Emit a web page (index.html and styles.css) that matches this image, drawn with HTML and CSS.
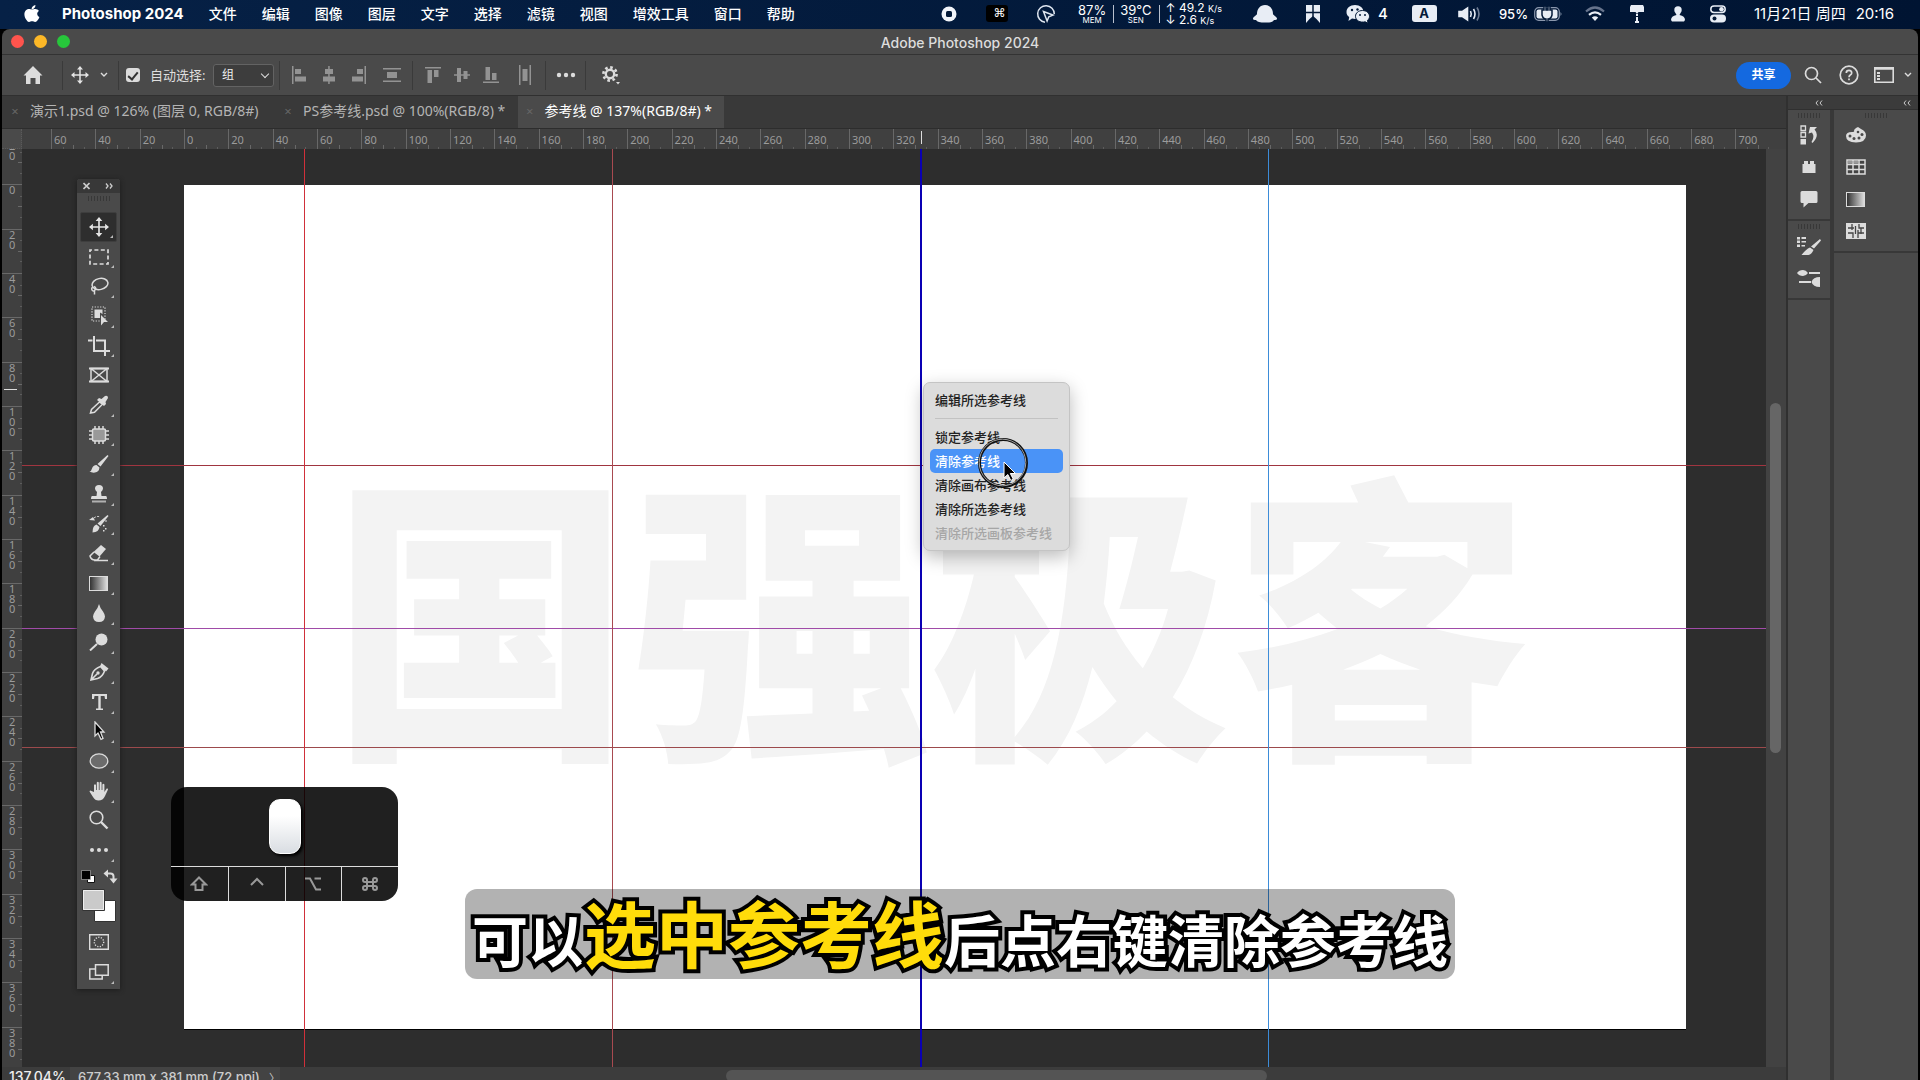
FILE: index.html
```html
<!DOCTYPE html>
<html lang="zh-CN">
<head>
<meta charset="utf-8">
<title>Adobe Photoshop 2024</title>
<link rel="stylesheet" href="styles.css">
</head>
<body>
<header class="menubar">
  <svg class="apple" width="18" height="20" viewBox="0 0 18 20"><path fill="#fff" d="M12.4 1c.1 1.200-.4 2.300-1.100 3.100-.7.800-1.700 1.400-2.700 1.300-.1-1.100.4-2.300 1.100-3C10.400 1.600 11.500 1.100 12.400 1zM15.900 6.900c-1 .6-1.700 1.600-1.700 2.900 0 1.500.9 2.700 2.200 3.200-.3.900-.8 1.900-1.400 2.700-.8 1.200-1.600 2.300-2.900 2.300-1.200 0-1.600-.7-3-.7s-1.900.7-3 .7c-1.200.1-2.200-1.200-3-2.400C1.400 13.100.6 8.900 2.500 6.800c.9-1.100 2.200-1.700 3.400-1.700 1.300 0 2.100.7 3.200.7 1 0 1.700-.7 3.200-.7 1.400 0 2.800.7 3.600 1.800z"/></svg>
  <nav class="menus">
    <a href="#" class="app-name">Photoshop 2024</a><a href="#">文件</a><a href="#">编辑</a><a href="#">图像</a><a href="#">图层</a><a href="#">文字</a><a href="#">选择</a><a href="#">滤镜</a><a href="#">视图</a><a href="#">增效工具</a><a href="#">窗口</a><a href="#">帮助</a>
  </nav>
  <div class="tray">
    <svg width="16" height="16" viewBox="0 0 16 16"><circle cx="8" cy="8" r="7.500" fill="#f2f5fa"/><rect x="5" y="5" width="6" height="6" rx="1.500" fill="#041a38"/></svg>
    <span class="cmd-box">⌘</span>
    <svg width="20" height="20" viewBox="0 0 20 20" fill="none" stroke="#dfe6f0" stroke-width="1.500"><path d="M9 18.200A8.300 8.300 0 1 1 18.300 10M7.500 7.500l9.500 3.600-4.200 1.700-1.700 4.200z"/></svg>
    <div class="stats">
      <div class="stat"><b>87%</b><small>MEM</small></div>
      <div class="stat"><b>39°C</b><small>SEN</small></div>
      <div class="net"><span>↑ 49.2 <i>K/s</i></span><span>↓ 2.6 <i>K/s</i></span></div>
    </div>
    <svg width="24" height="18" viewBox="0 0 24 18" fill="#e8edf5"><path d="M12 0c5 0 8 4 8 9 0 1 3.500 2.500 4 4.500.2 1-1 1.500-3 1.500-1 2-4 2.500-9 2.500S4 17 3 15c-2 0-3.200-.5-3-1.500C.5 11.500 4 10 4 9c0-5 3-9 8-9z"/></svg>
    <svg class="bookmark" width="14" height="18" viewBox="0 0 14 18"><path fill="#e8edf5" d="M0 0h14v18l-3.500-4L7 11l-3.500 3L0 18z"/><path stroke="#041a38" stroke-width="1.500" d="M7 0v12M0 7.500h14"/></svg>
    <div class="wechat"><svg width="24" height="20" viewBox="0 0 24 20"><path fill="#e8edf5" d="M9 1c5 0 8.500 3 8.500 7S14 15 9 15l-3-.4L2.500 17l.7-4C1.200 11.700.5 10 .5 8 .5 4 4 1 9 1z"/><path fill="#e8edf5" stroke="#041a38" d="M16.500 6.500c4 0 7 2.500 7 5.800 0 1.700-.7 3-2 4l.5 3-2.800-1.500c-5 1.200-9.700-1.300-9.700-5.500 0-3.300 3-5.800 7-5.800z"/><g fill="#041a38"><circle cx="6" cy="6" r="1.200"/><circle cx="11.500" cy="5.500" r="1.200"/><circle cx="14" cy="11" r="1"/><circle cx="19" cy="11" r="1"/></g></svg><span>4</span></div>
    <span class="input-src">A</span>
    <svg width="24" height="16" viewBox="0 0 24 16" fill="none" stroke="#e8edf5" stroke-width="1.600"><path fill="#e8edf5" d="M1 5.500h3.500L9.500 2v12L4.500 10.500H1z"/><path d="M12.500 5q1.500 3 0 6M15.500 3q3 5 0 10"/><path stroke="#6f7c93" d="M19 1.500q4 6.500 0 13"/></svg>
    <div class="battery"><span>95%</span><svg width="29" height="16" viewBox="0 0 29 16"><rect x=".7" y="1.700" width="24.600" height="12.600" rx="4" fill="none" stroke="#8a97ad" stroke-width="1.200"/><rect x="2.500" y="3.500" width="21" height="9" rx="2" fill="#e8edf5"/><path fill="#8a97ad" d="M26.500 6q2 2 0 4z"/><path fill="#e8edf5" stroke="#041a38" stroke-width="1.500" d="M10 0v4H8v5q1 4 4 4v3h2v-3q3 0 4-4V4h-2V0h-2v4h-2V0z"/></svg></div>
    <svg width="20" height="16" viewBox="0 0 20 16" fill="none" stroke-width="2.200"><path stroke="#66738c" d="M1 5.500q9-8 18 0"/><path stroke="#e8edf5" d="M4 8.800q6-5 12 0"/><path fill="#e8edf5" d="M6.800 11.500q3.200-2.500 6.400 0L10 15z"/></svg>
    <svg width="16" height="18" viewBox="0 0 16 18" fill="#e8edf5"><path d="M2 0h12l1 2v5H9.500L8 9 6.500 7H1V2z"/><path d="M7 9h2v2H7zM7 12h2v5H7zM6 16h4v2H6z"/></svg>
    <svg width="14" height="16" viewBox="0 0 14 16" fill="#e8edf5"><circle cx="7" cy="4" r="3.700"/><path d="M4.500 7h5l-1 2q5.500 1 5.500 5l-1 1.500H1L0 14q0-4 5.500-5z"/></svg>
    <svg width="16" height="18" viewBox="0 0 16 18"><rect x=".8" y="1" width="14.400" height="6.500" rx="3.200" fill="none" stroke="#e8edf5" stroke-width="1.500"/><circle cx="11.500" cy="4.200" r="2.300" fill="#e8edf5"/><rect x="0" y="9.500" width="16" height="8" rx="4" fill="#e8edf5"/><circle cx="4.500" cy="13.500" r="2" fill="#041a38"/></svg>
    <time class="clock"><span>11月21日 周四</span><span>20:16</span></time>
  </div>
</header>

<div class="window">
  <div class="titlebar">
    <div class="lights"><button class="close" aria-label="关闭"></button><button class="mini" aria-label="最小化"></button><button class="full" aria-label="全屏"></button></div>
    <h1>Adobe Photoshop 2024</h1>
  </div>

  <div class="options">
    <div class="group g-home"><button aria-label="主页"><svg width="20" height="20" viewBox="0 0 20 20"><path fill="#dcdcdc" d="M10 1l9.500 9.500H17V19h-4.500v-6h-5v6H3v-8.500H.5z"/></svg></button></div>
    <div class="group g-move"><button aria-label="移动工具"><svg width="18" height="18" viewBox="0 0 18 18"><use href="#i-move"/></svg></button><svg width="8" height="6" viewBox="0 0 8 6"><path d="M1 1l3 3 3-3" fill="none" stroke="#ddd" stroke-width="1.400"/></svg></div>
    <div class="group g-auto"><input type="checkbox" id="auto" checked><label for="auto">自动选择:</label><select aria-label="选择对象"><option>组</option></select></div>
    <div class="group g-align">
      <button aria-label="左对齐"><svg width="16" height="18" viewBox="0 0 16 18"><path d="M0 0h1.500v18H0zM3 3h6v5H3zM3 10.500h11v5H3z"/></svg></button>
      <button aria-label="水平居中"><svg width="16" height="18" viewBox="0 0 16 18"><path d="M7.200 0h1.500v18H7.200zM4 3h8v5H4zM2 10.500h12v5H2z"/></svg></button>
      <button aria-label="右对齐"><svg width="16" height="18" viewBox="0 0 16 18"><path d="M14.500 0H16v18h-1.500zM7 3h6v5H7zM2 10.500h11v5H2z"/></svg></button>
      <button class="wide" aria-label="水平分布"><svg width="18" height="16" viewBox="0 0 18 16"><path d="M0 1h18v1.500H0zM0 13.500h18V15H0zM4 5h10v6H4z"/></svg></button>
    </div>
    <div class="group g-align">
      <button aria-label="顶对齐"><svg width="16" height="18" viewBox="0 0 16 18"><path d="M0 1h16v1.500H0zM2.500 4h4.500v13H2.500zM9 4h4.500v7H9z"/></svg></button>
      <button aria-label="垂直居中"><svg width="16" height="18" viewBox="0 0 16 18"><path d="M0 8.200h16v1.500H0zM3 2h4v14H3zM9.500 5h4v8h-4z"/></svg></button>
      <button aria-label="底对齐"><svg width="16" height="18" viewBox="0 0 16 18"><path d="M0 15.500h16V17H0zM2.500 1h4.500v13H2.500zM9 7h4.500v7H9z"/></svg></button>
      <button class="wide" aria-label="垂直分布"><svg width="14" height="20" viewBox="0 0 14 20"><path d="M1 0h1.500v20H1zM11.500 0H13v20h-1.500zM4.500 4h5v12h-5z"/></svg></button>
    </div>
    <div class="group g-dots"><button aria-label="更多"><svg width="20" height="6" viewBox="0 0 20 6" fill="#dcdcdc"><circle cx="3" cy="3" r="2.200"/><circle cx="10" cy="3" r="2.200"/><circle cx="17" cy="3" r="2.200"/></svg></button></div>
    <div class="group g-gear"><button aria-label="设置"><svg width="20" height="20" viewBox="0 0 20 20"><circle cx="9" cy="9" r="4.200" fill="none" stroke="#dcdcdc" stroke-width="2.400"/><circle cx="9" cy="9" r="6.600" fill="none" stroke="#dcdcdc" stroke-width="2.600" stroke-dasharray="2.600 2.580"/><path fill="#dcdcdc" d="M15 17h4l-2 2.500z"/></svg></button></div>
    <div class="spacer"></div>
    <div class="right-tools">
      <button class="share">共享</button>
      <button aria-label="搜索"><svg width="18" height="18" viewBox="0 0 18 18" fill="none" stroke="#dcdcdc" stroke-width="1.700"><circle cx="7.500" cy="7.500" r="6"/><path d="M12 12l5 5"/></svg></button>
      <button aria-label="帮助"><svg width="20" height="20" viewBox="0 0 20 20" fill="none" stroke="#dcdcdc" stroke-width="1.700"><circle cx="10" cy="10" r="8.800"/><path d="M7.300 8q0-2.700 2.700-2.700T12.700 8q0 1.200-1.400 2-1.300.8-1.300 2.300M10 13.500v1.800"/></svg></button>
      <button class="workspace" aria-label="工作区"><svg width="20" height="16" viewBox="0 0 20 16" fill="none" stroke="#dcdcdc" stroke-width="1.600"><path d="M.8.800h18.400v14.400H.8zM.8 2h18.400"/><path d="M4.500 5v8" stroke-width="3" stroke-dasharray="2 1"/></svg><svg width="8" height="6" viewBox="0 0 8 6"><path d="M1 1l3 3 3-3" fill="none" stroke="#ddd" stroke-width="1.400"/></svg></button>
    </div>
  </div>

  <div class="body">
    <main class="doc">
      <div class="tabs">
        <a href="#" class="tab t1"><i>×</i>演示1.psd @ 126% (图层 0, RGB/8#)</a>
        <a href="#" class="tab t2"><i>×</i>PS参考线.psd @ 100%(RGB/8) *</a>
        <a href="#" class="tab active"><i>×</i>参考线 @ 137%(RGB/8#) *</a>
      </div>
      <div class="work">
        <div class="corner"></div>
        <div class="ruler-h"><div class="scale"><span>60</span><span>40</span><span>20</span><span>0</span><span>20</span><span>40</span><span>60</span><span>80</span><span>100</span><span>120</span><span>140</span><span>160</span><span>180</span><span>200</span><span>220</span><span>240</span><span>260</span><span>280</span><span>300</span><span>320</span><span>340</span><span>360</span><span>380</span><span>400</span><span>420</span><span>440</span><span>460</span><span>480</span><span>500</span><span>520</span><span>540</span><span>560</span><span>580</span><span>600</span><span>620</span><span>640</span><span>660</span><span>680</span><span>700</span></div><div class="mark-x"></div></div>
        <div class="ruler-v"><div class="scale"><span>20</span><span>0</span><span>20</span><span>40</span><span>60</span><span>80</span><span>100</span><span>120</span><span>140</span><span>160</span><span>180</span><span>200</span><span>220</span><span>240</span><span>260</span><span>280</span><span>300</span><span>320</span><span>340</span><span>360</span><span>380</span></div><div class="mark-y"></div></div>
        <div class="stage">
          <div class="artboard"><p>国强极客</p></div>
          <div class="guide h h1"></div><div class="guide h h2"></div><div class="guide h h3"></div>
          <div class="guide v v1"></div><div class="guide v v2"></div><div class="guide v v3"></div><div class="guide v v4"></div>

          <aside class="toolbox">
            <div class="tb-head"><svg width="7" height="8" viewBox="0 0 7 8"><path d="M.5 1l6 6M6.500 1l-6 6" stroke="#ccc" stroke-width="1.600"/></svg><svg width="8" height="6" viewBox="0 0 8 6" fill="none" stroke="#ccc" stroke-width="1.300"><path d="M1 .5L3 3 1 5.500M5 .5L7 3 5 5.500"/></svg></div>
            <div class="grip"></div>
            <div class="tools">
              <button class="on sub" aria-label="移动"><svg width="20" height="20" viewBox="0 0 18 18"><g id="i-move" fill="none" stroke="#e4e4e4" stroke-width="1.500"><path d="M9 2v14M2 9h14"/><path fill="#e4e4e4" stroke="none" d="M9 0l3 3.500H6zM9 18l3-3.500H6zM0 9l3.500-3v6zM18 9l-3.500-3v6z"/></g></svg></button>
              <button class="sub" aria-label="选框"><svg width="20" height="16" viewBox="0 0 20 16"><rect x="1" y="1" width="18" height="14" fill="none" stroke="#dcdcdc" stroke-width="1.700" stroke-dasharray="4 2.400" stroke-dashoffset="2"/></svg></button>
              <button class="sub" aria-label="套索"><svg width="20" height="18" viewBox="0 0 20 18" fill="none" stroke="#dcdcdc" stroke-width="1.500"><ellipse cx="11" cy="7" rx="8" ry="5.500" transform="rotate(-12 11 7)"/><path d="M4 10q-2 1-1 3t3 0-1-3.500M5.500 13v4.500"/></svg></button>
              <button class="sub" aria-label="对象选择"><svg width="20" height="20" viewBox="0 0 20 20"><rect x="3" y="1" width="13" height="14" fill="none" stroke="#dcdcdc" stroke-width="1.200" stroke-dasharray="1.200 1.500"/><path fill="#dcdcdc" d="M5.500 3.500h8V8L11 6.500V12H5.500z"/><path fill="#dcdcdc" d="M12 9l7 7h-4l-3 3.500z"/></svg></button>
              <button class="sub" aria-label="裁剪"><svg width="22" height="20" viewBox="0 0 22 20" fill="none" stroke="#dcdcdc" stroke-width="2"><path d="M6 0v15h16M0 4.500h4.500M8 4.500h9V20"/></svg></button>
              <button aria-label="图框"><svg width="20" height="16" viewBox="0 0 20 16" fill="none" stroke="#dcdcdc" stroke-width="1.500"><path d="M2 1.500h16v13H2zM2 1.500l16 13M18 1.500l-16 13"/><path d="M0 1.500h20M0 14.500h20" stroke-width="1.800"/></svg></button>
              <button class="sub" aria-label="吸管"><svg width="20" height="20" viewBox="0 0 20 20"><path fill="none" stroke="#dcdcdc" stroke-width="1.500" d="M10.500 7L2.500 14.500 1.500 18l4-.8 8-8z"/><path fill="#dcdcdc" d="M16 1q3-1 3 2l-2.500 4 .5 2-2 2-7-6 2-2 2.500 1z"/></svg></button>
              <button class="sub" aria-label="修复"><svg width="20" height="18" viewBox="0 0 20 18"><path stroke="#dcdcdc" stroke-width="1.500" d="M6 0v18M10 0v18M14 0v18M0 5h20M0 9h20M0 13h20"/><rect x="3.500" y="3" width="13" height="12" rx="1.500" fill="#999" stroke="#dcdcdc" stroke-width="1.500"/></svg></button>
              <button class="sub" aria-label="画笔"><svg width="20" height="20" viewBox="0 0 20 20" fill="#dcdcdc"><path d="M18.500 1l1 1-8 10.500L8.500 10zM7.500 11l3 2.500Q10 18 6 18.500q-3 .5-5.500-1 2-.5 2.500-3Q4 11 7.500 11z"/></svg></button>
              <button class="sub" aria-label="图章"><svg width="18" height="20" viewBox="0 0 18 20" fill="#dcdcdc"><path d="M9 1q4 0 4 3.500Q13 6 11 8l.5 4H16q1 0 1 3H1q0-3 1-3h4.500L7 8Q5 6 5 4.500 5 1 9 1z"/><path opacity=".7" d="M2 16.500h14v2H2z"/></svg></button>
              <button class="sub" aria-label="历史画笔"><svg width="20" height="20" viewBox="0 0 20 20" fill="#dcdcdc"><path d="M18.500 1l1 1-8 10-3-2.500zM7.500 10.500l3 2.500q-.5 5-7 5.500 0-7 4-8zM0 6l4-3 2 3.500zM14 11h1.500v1.500H14zM16 14h1.500v1.500H16zM14 16h1.500v1.500H14z"/><path d="M5 4q3-2.500 6-1M17 6v3" fill="none" stroke="#dcdcdc" stroke-dasharray="2 1.500"/></svg></button>
              <button class="sub" aria-label="橡皮擦"><svg width="20" height="18" viewBox="0 0 20 18"><path fill="#dcdcdc" d="M12 1l5 4-6.500 7.500-6-4.500z"/><path fill="none" stroke="#dcdcdc" stroke-width="1.500" d="M5 8l-4 4q1 4 5 4h2.500l2.500-3.500M5 16.500h14"/></svg></button>
              <button class="sub" aria-label="渐变"><span class="grad"></span></button>
              <button class="sub" aria-label="模糊"><svg width="12" height="18" viewBox="0 0 12 18"><path fill="#dcdcdc" d="M6 0q1 4 4 7.500 2 3 2 5Q11.500 18 6 18T0 12.500q0-2 2-5Q5 4 6 0z"/></svg></button>
              <button class="sub" aria-label="减淡"><svg width="20" height="18" viewBox="0 0 20 18"><circle cx="12.500" cy="6.500" r="6" fill="#dcdcdc"/><path d="M8 11l-7 6.500" stroke="#dcdcdc" stroke-width="2"/></svg></button>
              <button class="sub" aria-label="钢笔"><svg width="20" height="20" viewBox="0 0 20 20"><path fill="none" stroke="#dcdcdc" stroke-width="1.600" d="M11.500 4.500Q5 7 3.500 11.500L2 18l6.500-1.500Q13.500 15 15.500 9zM2 18l6-6"/><circle cx="9" cy="11" r="1.700" fill="#dcdcdc"/><path fill="#dcdcdc" d="M12.500 1l7 5.500-2.500 3-6-5z"/></svg></button>
              <button class="sub" aria-label="文字"><svg width="18" height="18" viewBox="0 0 18 18"><path fill="#dcdcdc" d="M2 1h15v5h-2l-.5-3H10.700v12.500H13V17H6v-1.500h2.300V3H4.500L4 6H2z"/></svg></button>
              <button class="sub" aria-label="路径选择"><svg width="14" height="20" viewBox="0 0 14 20"><path fill="#000" stroke="#dcdcdc" stroke-width="1.300" d="M3 1l9 10H8.500l2.500 6.500-2 .8L6 12l-3 3z"/></svg></button>
              <button class="sub" aria-label="椭圆"><svg width="20" height="16" viewBox="0 0 20 16"><ellipse cx="10" cy="8" rx="8.800" ry="7.200" fill="#6c6c6c" stroke="#dcdcdc" stroke-width="1.300"/></svg></button>
              <button class="sub" aria-label="抓手"><svg width="20" height="20" viewBox="0 0 20 20"><path fill="#dcdcdc" d="M5 11V4q1-1.300 2 0v5h.8V1.500q1-1.500 2 0V9h.8V1.500q1-1.500 2 0V9h.8V3.500q1-1.300 2 0V11l2.300-3.500q1.500-.5 1.300 1L16 15q-2 4.500-6.500 4.500Q6 19.500 4 16L.5 10.500q.5-1.500 2-.5z"/></svg></button>
              <button aria-label="缩放"><svg width="20" height="20" viewBox="0 0 20 20" fill="none" stroke="#dcdcdc"><circle cx="7.500" cy="7.500" r="6.300" stroke-width="1.600"/><path d="M12 12l6.500 6.500" stroke-width="2.400"/></svg></button>
              <button class="sub" aria-label="编辑工具栏"><svg width="20" height="6" viewBox="0 0 20 6" fill="#dcdcdc"><circle cx="3" cy="3" r="2"/><circle cx="10" cy="3" r="2"/><circle cx="17" cy="3" r="2"/></svg></button>
            </div>
            <svg class="swatches" width="38" height="54" viewBox="0 0 38 54"><path fill="#fff" stroke="#111" d="M7.500 6.500h7v7h-7z"/><path fill="#000" stroke="#bbb" stroke-width=".6" d="M1.500 1.500h9v9h-9z"/><path d="M27 4.500h3.500q3 0 3 3V11" fill="none" stroke="#dcdcdc" stroke-width="2"/><path fill="#dcdcdc" d="M23.500 4.500L28 .5v8zM33.500 14.500L29.500 9.500h8z"/><path fill="#fff" stroke="#333" d="M14.500 31.500h21v21h-21z"/><path fill="#cacaca" stroke="#333" d="M2.500 20.500h22v21h-22z"/><path fill="none" stroke="#eee" d="M3.500 21.500h20v19h-20z"/></svg>
            <button aria-label="快速蒙版"><svg width="20" height="16" viewBox="0 0 20 16" fill="none" stroke="#dcdcdc" stroke-width="1.400"><path d="M.7.700h18.600v14.600H.7z"/><circle cx="10" cy="8" r="4.700" stroke-dasharray="1.200 1.400"/></svg></button>
            <button class="sub" aria-label="屏幕模式"><svg width="20" height="16" viewBox="0 0 20 16" fill="#4a4a4a" stroke="#dcdcdc" stroke-width="1.500"><path d="M.8 5h12.400v10H.8z"/><path d="M6.500.8h12.700v10.400H6.500z"/></svg></button>
          </aside>

          <div class="context" role="menu">
            <button role="menuitem">编辑所选参考线</button>
            <hr>
            <button role="menuitem">锁定参考线</button>
            <button role="menuitem" class="hot">清除参考线</button>
            <button role="menuitem">清除画布参考线</button>
            <button role="menuitem">清除所选参考线</button>
            <button role="menuitem" disabled>清除所选画板参考线</button>
          </div>
          <svg class="pointer" width="52" height="52" viewBox="0 0 52 52"><circle cx="26" cy="26" r="23.500" fill="none" stroke="#111" stroke-width="3"/><circle cx="25.500" cy="25.500" r="23.300" fill="none" stroke="#ddd" stroke-width=".7"/><path fill="#000" stroke="#fff" stroke-width="1" d="M27 25v16l3.800-3.500 3 6 2.500-1.300-3-5.700h5.200z"/></svg>

          <div class="keys">
            <div class="mouse-row"><span class="mouse"></span></div>
            <div class="mods">
              <span><svg width="18" height="16" viewBox="0 0 18 16"><path d="M9 1.500l7 7h-3.500V14h-7V8.500H2z"/></svg></span>
              <span><svg width="18" height="16" viewBox="0 0 18 16"><path d="M3 9l6-6 6 6"/></svg></span>
              <span><svg width="18" height="16" viewBox="0 0 18 16"><path d="M1 2.500h5l6 11h5M10.500 2.500H17"/></svg></span>
              <span><svg width="18" height="16" viewBox="0 0 18 16"><path d="M6 6V4a2 2 0 1 0-2 2h10a2 2 0 1 0-2-2v8a2 2 0 1 0 2-2H4a2 2 0 1 0 2 2z"/></svg></span>
            </div>
          </div>

          <p class="caption">可以<em>选中参考线</em>后点右键清除参考线</p>
        </div>
        <div class="vscroll"><div class="thumb"></div></div>
      </div>
      <footer class="status"><span class="zoom">137.04%</span><span class="size">677.33 mm x 381 mm (72 ppi)<b>〉</b></span><div class="hscroll"><div class="thumb"></div></div></footer>
    </main>

    <aside class="docks">
      <div class="dock d1">
        <div class="dock-head"><svg width="8" height="6" viewBox="0 0 8 6"><path d="M3 .5L1 3l2 2.500M7 .5L5 3l2 2.500" fill="none" stroke="#ccc"/></svg></div>
        <div class="panel">
          <div class="grip"></div>
          <button aria-label="历史记录"><svg width="18" height="20" viewBox="0 0 18 20"><path fill="none" stroke="#dcdcdc" stroke-width="1.300" d="M1 1h4.500v4.500H1zM1 7.500h4.500V12H1z"/><path fill="#dcdcdc" d="M.5 14H6v5.500H.5z"/><path fill="#dcdcdc" d="M8.500 8.500L10 2h7l-2.500 2.500q5.500 6-2 13.500-.5-.5-1-1 3.500-5 .5-9.500z"/></svg></button>
          <button aria-label="库"><svg width="14" height="14" viewBox="0 0 14 14" fill="#dcdcdc"><path d="M1 4h1V1h4v3h2V1h4v3h1.500v9H.5V4z"/></svg></button>
          <button aria-label="注释"><svg width="18" height="18" viewBox="0 0 18 18" fill="#dcdcdc"><path d="M2 1h14q1.500 0 1.500 1.500v9q0 1.500-1.500 1.500H8.500l-5 4.500V13H2Q.5 13 .5 11.500v-9Q.5 1 2 1z"/></svg></button>
        </div>
        <div class="panel">
          <div class="grip"></div>
          <button aria-label="画笔设置"><svg width="24" height="20" viewBox="0 0 24 20" fill="#dcdcdc"><path d="M0 1h3v2.500H0zM4.500 1H9v2H4.500zM0 4.500h3V7H0zM4.500 5H9v1.500H4.500zM0 8.500h3V11H0zM4.500 9H8v1.500H4.500zM23 3l1 1.500-7 8-3-2zM13 11.500l3.500 2.500q-2 4.500-5 5H4.500q4.500-6 8.500-7.500z"/></svg></button>
          <button aria-label="画笔"><svg width="24" height="20" viewBox="0 0 24 20" fill="#dcdcdc"><path d="M0 5q2-3 6-3 3 0 5 3-2 3-5 3Q2 8 0 5zM12 4h11v2H12zM2 13h12v2H2zM23 9v10q-7 0-8.500-5Q16 9 23 9z"/></svg></button>
        </div>
      </div>
      <div class="dock d2">
        <div class="dock-head"><svg width="8" height="6" viewBox="0 0 8 6"><path d="M3 .5L1 3l2 2.500M7 .5L5 3l2 2.500" fill="none" stroke="#ccc"/></svg></div>
        <div class="panel">
          <div class="grip"></div>
          <button aria-label="颜色"><svg width="20" height="16" viewBox="0 0 20 16"><path fill="#dcdcdc" d="M10 1l2-1 3 2q5 2 5 6.500Q20 15 10 15.500 0 15 0 9q0-4 6-4 3 0 2-2z"/><g fill="#4a4a4a"><circle cx="4" cy="9" r="1.500"/><circle cx="8" cy="11.500" r="1.500"/><circle cx="13" cy="11" r="1.500"/><circle cx="16" cy="7.500" r="1.500"/><circle cx="12" cy="5" r="1.300"/></g></svg></button>
          <button aria-label="色板"><svg width="20" height="16" viewBox="0 0 20 16"><path fill="#444" stroke="#dcdcdc" stroke-width="1.500" d="M1 1h18v14H1zM1 5.500h18M1 10.500h18M7 1v14M13 1v14"/><path fill="#999" d="M2 2h4.200v2.800H2zM8 2h4.200v2.800H8z"/></svg></button>
          <button aria-label="渐变"><span class="grad"></span></button>
          <button aria-label="图案"><svg width="20" height="16" viewBox="0 0 20 16"><path fill="#dcdcdc" d="M0 0h20v16H0z"/><path fill="none" stroke="#444" stroke-width="1.300" d="M6 1v6M2 5h6M13 1v4h5M9.500 3v8M2 10h5v5M12 7v8M12 10h6M15 5v6"/></svg></button>
        </div>
      </div>
    </aside>
  </div>
</div>
</body>
</html>
```
FILE: styles.css
```css
* { box-sizing: border-box; }

body {
  margin: 0;
  height: 100vh;
  display: flex;
  flex-direction: column;
  overflow: hidden;
  background: #000;
  color: #dedede;
  font: 13px/16px "Noto Sans", "Noto Sans CJK SC", sans-serif;
}

p, h1 { margin: 0; }
a { color: inherit; text-decoration: none; }
svg { display: block; flex: none; }
button {
  display: flex;
  align-items: center;
  justify-content: center;
  margin: 0;
  padding: 0;
  border: 0;
  background: none;
  color: inherit;
  font: inherit;
}

/* System menu bar */
.menubar {
  flex: none;
  display: flex;
  align-items: center;
  height: 29px;
  padding: 0 10px 2px 23px;
  background: linear-gradient(90deg, #062146, #001432);
  color: #fff;
  font: 500 14px/26px Inter, "Noto Sans CJK SC", sans-serif;
}
.menus { display: flex; gap: 25px; margin-left: 21px; white-space: nowrap; }
.app-name { font-weight: 700; font-size: 15px; }
.tray {
  flex: 1;
  display: grid;
  grid-template-columns: 47px 49px 49px 160px 70px 37px 60px 54px 38px 84px 43px 41px 41px 40px 172px;
  justify-content: end;
  justify-items: center;
  align-items: center;
  white-space: nowrap;
}
.cmd-box { padding-left: 8px; width: 22px; height: 17px; border-radius: 3px; background: #000; font: 12px/17px "DejaVu Sans", sans-serif; }
.stats { display: flex; line-height: 13px; font-weight: 400; }
.stat { display: flex; flex-direction: column; align-items: center; padding-right: 7px; margin-right: 6px; border-right: 1px solid #b8c0ce; height: 18px; justify-content: center; }
.stat b { font-weight: 400; font-size: 13px; line-height: 12px; }
.stat small { font-size: 8px; line-height: 8px; }
.net { display: flex; flex-direction: column; justify-content: center; font-size: 12px; line-height: 11px; height: 18px; }
.net i { font-style: normal; font-size: 9px; }
.bookmark { margin-right: 12px; }
.wechat, .battery { display: flex; align-items: center; gap: 8px; }
.wechat { font-size: 15px; }
.battery { gap: 6px; font-size: 13px; }
.input-src { width: 25px; height: 17px; border-radius: 3px; background: #e8edf5; color: #041a38; font-weight: 700; font-size: 13px; line-height: 17px; text-align: center; }
.clock { display: flex; gap: 10px; font-size: 15px; font-weight: 400; }

/* Application window */
.window {
  flex: 1;
  min-height: 0;
  display: flex;
  flex-direction: column;
  margin: 0 2px;
  border-radius: 8px 8px 0 0;
  overflow: hidden;
  background: #4a4a4a;
}
.titlebar {
  flex: none;
  display: grid;
  grid-template-columns: 1fr auto 1fr;
  align-items: center;
  height: 26px;
  padding: 0 9px;
  border-bottom: 1px solid #333;
}
.titlebar h1 { padding-top: 2px; font: 500 14px/22px Inter, sans-serif; color: #ddd; }
.lights { display: flex; gap: 10px; }
.lights button { width: 13px; height: 13px; border-radius: 50%; }
.close { background: #ff544d; }
.mini { background: #fdb827; }
.full { background: #27c63b; }

/* Tool options */
.options { flex: none; display: flex; align-items: center; height: 41px; border-bottom: 1px solid #303030; }
.group { display: flex; align-items: center; height: 29px; border-left: 1px solid #3a3a3a; }
.g-home { width: 60px; padding-left: 21px; border: 0; }
.g-move { width: 56px; padding-left: 8px; gap: 11px; }
.g-auto { position: relative; width: 161px; padding-left: 7px; }
.g-auto input {
  appearance: none;
  width: 14px;
  height: 14px;
  margin: 0 10px 0 0;
  border-radius: 3px;
  background: #dcdcdc;
  display: grid;
  place-items: center;
}
.g-auto input:checked::after { content: ""; width: 4px; height: 8px; border: solid #333; border-width: 0 2px 2px 0; rotate: 40deg; }
.g-auto label { width: 63px; white-space: nowrap; }
.g-auto select {
  appearance: none;
  width: 61px;
  height: 23px;
  padding: 0 0 0 8px;
  border: 1px solid #636363;
  border-radius: 3px;
  background: #3d3d3d;
  color: #eee;
  font: inherit;
  font-size: 12px;
}
.g-auto::after {
  content: "";
  position: absolute;
  right: 11px;
  top: 10px;
  width: 5px;
  height: 5px;
  border: solid #ddd;
  border-width: 0 1px 1px 0;
  rotate: 45deg;
}
.g-align { width: 133px; padding-left: 6px; fill: #939393; }
.g-align button { width: 29px; }
.g-align .wide { width: 40px; }
.g-dots { width: 40px; justify-content: center; }
.g-gear { width: 50px; justify-content: center; }
.spacer { flex: 1; }
.right-tools { display: flex; align-items: center; gap: 17px; padding-right: 6px; }
.share { width: 55px; height: 27px; margin-right: -4px; border-radius: 14px; background: #1469e0; color: #fff; font-weight: 700; font-size: 12px; }
.workspace { gap: 10px; margin-left: -2px; }

/* Document area */
.body { flex: 1; min-height: 0; display: flex; }
.doc { flex: 1; min-width: 0; display: flex; flex-direction: column; background: #424242; }
.tabs { flex: none; display: flex; height: 33px; background: #393939; border-bottom: 1px solid #2d2d2d; color: #b4b4b4; font-size: 14px; line-height: 30px; white-space: nowrap; }
.tab { display: flex; gap: 11px; padding: 0 12px 0 8px; }
.tab i { width: 8px; font-style: normal; font-size: 13px; color: #666; text-align: center; }
.t1 { width: 274px; padding-left: 9px; }
.t2 { width: 242px; }
.tab.active { width: 206px; background: #4a4a4a; color: #fff; }

.work { flex: 1; min-height: 0; display: grid; grid-template: 20px minmax(0, 1fr) / 20px minmax(0, 1fr) 20px; }
.corner { background: #4a4a4a; border: 1px dotted #5a5a5a; border-width: 0 1px 1px 0; }
.ruler-h, .ruler-v { position: relative; background: #404040; color: #9b9b9b; font: 11px/10px "Noto Sans", sans-serif; }
.ruler-h { grid-column: 2 / -1; overflow: hidden; }
.ruler-h .scale { display: flex; height: 20px; margin: 0 6px 0 29px; }
.ruler-h span {
  flex: 1 1 0;
  min-width: 0;
  padding: 6px 0 0 2px;
  border-left: 1px solid #686868;
  background:
    linear-gradient(#686868, #686868) 50% 100% / 1px 4px no-repeat,
    linear-gradient(#5c5c5c, #5c5c5c) 25% 100% / 1px 2px no-repeat,
    linear-gradient(#5c5c5c, #5c5c5c) 75% 100% / 1px 2px no-repeat;
}
.mark-x { position: absolute; left: 899px; top: 2px; width: 1px; height: 13px; background: #ddd; }
.ruler-v { clip-path: inset(0); }
.ruler-v .scale { display: flex; flex-direction: column; height: calc(100% + 13px); margin-top: -9px; }
.ruler-v span {
  flex: 1 1 0;
  min-height: 0;
  padding: 0 6px 0 7px;
  border-top: 1px solid #686868;
  word-break: break-all;
  background:
    linear-gradient(#686868, #686868) 100% 50% / 4px 1px no-repeat,
    linear-gradient(#5c5c5c, #5c5c5c) 100% 25% / 2px 1px no-repeat,
    linear-gradient(#5c5c5c, #5c5c5c) 100% 75% / 2px 1px no-repeat;
}
.mark-y { position: absolute; left: 2px; top: 240px; width: 13px; height: 1px; background: #ddd; }

.stage { position: relative; overflow: hidden; background: #2d2d2d; }
.artboard {
  position: absolute;
  left: 162px;
  top: 36px;
  width: 1502px;
  height: 845px;
  background: #fff;
  border-bottom: 1px solid #000;
  display: grid;
  place-items: center;
}
.artboard p { padding: 0 8px 4px 0; color: #f3f3f3; font: 900 300px/360px "Noto Sans CJK SC", sans-serif; white-space: nowrap; }
.guide { position: absolute; }
.guide.h { left: 0; right: 0; height: 1px; }
.guide.v { top: 0; bottom: 0; width: 1px; }
.h1 { top: 316px; background: #a03540; }
.h2 { top: 479px; background: #a04ba8; }
.h3 { top: 598px; background: #9c4a4c; }
.v1 { left: 282px; background: #d0303a; }
.v2 { left: 590px; background: #a84a50; }
.guide.v3 { left: 898px; width: 2px; background: #0a00b4; }
.v4 { left: 1246px; background: #3d8cd8; }

/* Floating toolbox */
.toolbox {
  position: absolute;
  left: 55px;
  top: 30px;
  width: 43px;
  display: flex;
  flex-direction: column;
  align-items: center;
  padding-bottom: 2px;
  border-radius: 3px 3px 0 0;
  background: #4a4a4a;
  box-shadow: 0 1px 5px #1b1b1b;
}
.tb-head { align-self: stretch; display: flex; align-items: center; justify-content: space-between; height: 14px; padding: 0 7px 0 6px; background: #383838; border-radius: 3px 3px 0 0; }
.grip { width: 22px; height: 5px; margin: 3px 0; background: repeating-linear-gradient(90deg, #383838 0 1px, transparent 1px 3px); }
.tools { display: grid; grid-auto-rows: 1fr; height: 653px; margin-top: 8px; }
.toolbox button { position: relative; width: 37px; height: 30px; }
.tools button { height: auto; }
.toolbox .on { background: #2e2e2e; border: 1px solid #3e3e3e; border-radius: 2px; }
.sub::after { content: ""; position: absolute; right: 3px; bottom: 3px; border-left: 3px solid transparent; border-bottom: 3px solid #bbb; }
.grad { width: 19px; height: 15px; border: 1px solid #dcdcdc; background: linear-gradient(90deg, #333, #dcdcdc); }
.swatches { margin: 4px 0; }

/* Guide context menu */
.context {
  position: absolute;
  left: 901px;
  top: 233px;
  width: 147px;
  padding: 5px 6px;
  border: 1px solid #c4c4c4;
  border-radius: 7px;
  background: #dcdcdc;
  box-shadow: 0 6px 18px #0004;
  color: #222;
}
.context button { justify-content: flex-start; width: 100%; height: 24px; padding-left: 5px; border-radius: 5px; font: 500 13px/24px "Noto Sans CJK SC", sans-serif; white-space: nowrap; }
.context hr { height: 1px; margin: 6px 5px; border: 0; background: #c2c2c2; }
.context .hot { background: #4a93f7; color: #fff; }
.context button:disabled { color: #a6a6a6; }
.pointer { position: absolute; left: 955px; top: 288px; }

/* Keystroke display */
.keys { position: absolute; left: 149px; top: 638px; width: 227px; border-radius: 16px; overflow: hidden; background: #000000df; }
.mouse-row { display: grid; place-items: center; height: 80px; border-bottom: 1px solid #ddd; }
.mouse { width: 32px; height: 55px; border: 1px solid #fff; border-radius: 11px; background: linear-gradient(#fff 30%, #d9dde2); box-shadow: 2px 2px 3px #000; }
.mods { display: grid; grid-template-columns: repeat(4, 1fr); height: 34px; fill: none; stroke: #999; stroke-width: 2; }
.mods span { display: grid; place-items: center; }
.mods span + span { border-left: 1px solid #ddd; }

/* Subtitle */
.caption {
  position: absolute;
  left: 443px;
  top: 740px;
  width: 990px;
  height: 90px;
  padding-top: 2px;
  border-radius: 12px;
  background: #0000004d;
  color: #fff;
  text-align: center;
  white-space: nowrap;
  font: 700 56px/90px "Noto Sans CJK SC", sans-serif;
  -webkit-text-stroke: 8px #000;
  paint-order: stroke fill;
}
.caption em { font-style: normal; font-size: 72px; line-height: 80px; color: #ffdc0a; }

.vscroll { padding: 254px 5px 0 4px; background: #424242; }
.vscroll .thumb { height: 350px; border-radius: 6px; background: #666; }

/* Status bar */
.status { flex: none; display: flex; height: 13px; overflow: hidden; font: 500 14px/20px Inter, sans-serif; color: #ccc; white-space: nowrap; background: #3c3c3c; }
.zoom { width: 68px; padding-left: 7px; color: #eee; }
.size { width: 210px; padding-left: 8px; background: #434343; font-size: 13px; }
.size b { margin-left: 9px; font-size: 11px; font-weight: 400; }
.hscroll { flex: 1; padding: 3px 0 0 446px; }
.hscroll .thumb { width: 541px; height: 12px; border-radius: 6px; background: #545454; }

/* Collapsed panels */
.docks { flex: none; display: flex; gap: 4px; width: 132px; background: #383838; border-left: 2px solid #303030; }
.dock { display: flex; flex-direction: column; background: #4a4a4a; }
.d1 { width: 42px; }
.d2 { flex: 1; }
.dock-head { display: flex; align-items: center; justify-content: flex-end; height: 14px; padding-right: 7px; background: #3b3b3b; border-bottom: 1px solid #303030; }
.d2 .dock-head { margin-left: -4px; }
.panel { display: flex; flex-direction: column; align-items: center; border-bottom: 2px solid #383838; padding-bottom: 4px; }
.panel .grip { margin: 3px 0 1px; }
.panel button { height: 32px; }
.d2 .panel .grip { align-self: flex-start; margin-left: 31px; }
.d2 .panel button { align-self: flex-start; margin-left: 12px; }
```
